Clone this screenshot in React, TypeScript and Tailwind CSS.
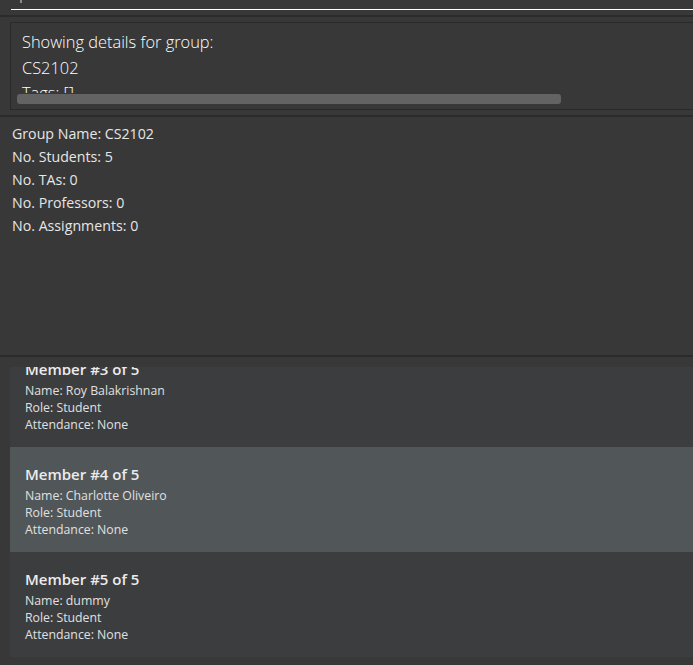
import React from "react";

const members = [
  { n: 3, name: "Roy Balakrishnan", selected: false },
  { n: 4, name: "Charlotte Oliveiro", selected: true },
  { n: 5, name: "dummy", selected: false },
];

export default function App() {
  return (
    <div
      className="w-[693px] h-[665px] bg-[#383838] overflow-hidden flex flex-col text-[#e6e6e6]"
      style={{ fontFamily: '"Open Sans", "Noto Sans", sans-serif' }}
    >
      {/* command box */}
      <div className="h-[15px] shrink-0 flex flex-col">
        <div className="pl-[20px] h-[9px]">
          <div className="w-[2px] h-[3px] bg-[#8a8a8a]" />
        </div>
        <div className="ml-[11px] h-px bg-white" />
      </div>
      <div className="h-[2px] bg-[#2b2b2b] shrink-0" />

      {/* result display */}
      <div className="h-[98px] shrink-0 pt-[5px] pl-[10px]">
        <div className="h-[88px] border-y border-l border-[#2a2a2a] flex flex-col">
          <div className="h-[70px] overflow-hidden pl-[11px] pt-[6px] text-[16.4px] leading-[25.5px] font-light text-white">
            <div>Showing details for group:</div>
            <div>CS2102</div>
            <div>Tags: []</div>
          </div>
          <div className="pl-[6px] pt-[1px]">
            <div className="w-[544px] h-[10px] rounded-[3px] bg-[#636363]" />
          </div>
        </div>
      </div>
      <div className="h-[2px] bg-[#2b2b2b] shrink-0" />

      {/* group info */}
      <div className="h-[238px] shrink-0 pl-[12px] pt-[5px] text-[14.2px] leading-[23px] text-[#e6e6e6]">
        <div>Group Name: CS2102</div>
        <div>No. Students: 5</div>
        <div>No. TAs: 0</div>
        <div>No. Professors: 0</div>
        <div>No. Assignments: 0</div>
      </div>
      <div className="h-[2px] bg-[#2b2b2b] shrink-0" />

      {/* member list */}
      <div className="flex-1 pl-[10px] pt-[10px] pb-[8px] flex flex-col">
        <div className="h-[290px] overflow-hidden">
          <div className="-mt-[25px]">
            {members.map((m) => (
              <div
                key={m.n}
                className={`h-[105px] pl-[15px] pt-[16px] ${m.selected ? "bg-[#515658]" : "bg-[#3c3d3f]"}`}
              >
                <div className="text-[15px] leading-[22px] font-semibold text-[#ececec]">
                  Member #{m.n} of 5
                </div>
                <div className="mt-[2px] text-[12.3px] leading-[17px] text-[#e0e0e0]">
                  <div>Name: {m.name}</div>
                  <div>Role: Student</div>
                  <div>Attendance: None</div>
                </div>
              </div>
            ))}
          </div>
        </div>
      </div>
    </div>
  );
}
